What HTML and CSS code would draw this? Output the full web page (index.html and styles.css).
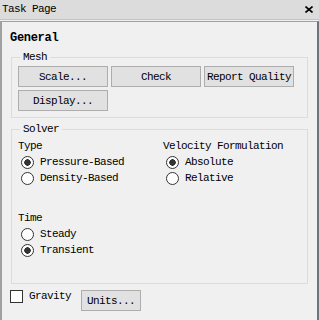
FILE: index.html
```html
<!DOCTYPE html>
<html lang="en">
<head>
    <meta charset="UTF-8">
    <title>Task Page</title>
    <link rel="stylesheet" href="styles.css">
</head>
<body>
    <div class="titlebar">
        <span class="title">Task Page</span>
        <svg class="close" width="8" height="7" viewBox="0 0 8 7">
            <path d="M0.5 0.5 L7.5 6.5 M7.5 0.5 L0.5 6.5" stroke="#000" stroke-width="1.6" fill="none"/>
        </svg>
    </div>

    <div class="panel">
        <div class="heading">General</div>

        <fieldset class="group mesh">
            <legend>Mesh</legend>
            <div class="btn-grid">
                <button class="btn">Scale...</button>
                <button class="btn">Check</button>
                <button class="btn">Report Quality</button>
                <button class="btn">Display...</button>
            </div>
        </fieldset>

        <fieldset class="group solver">
            <legend>Solver</legend>
            <div class="cols">
                <div class="col">
                    <div class="label">Type</div>
                    <div class="radio"><span class="dot checked"></span>Pressure-Based</div>
                    <div class="radio"><span class="dot"></span>Density-Based</div>
                </div>
                <div class="col">
                    <div class="label">Velocity Formulation</div>
                    <div class="radio"><span class="dot checked"></span>Absolute</div>
                    <div class="radio"><span class="dot"></span>Relative</div>
                </div>
            </div>
            <div class="time">
                <div class="label">Time</div>
                <div class="radio"><span class="dot"></span>Steady</div>
                <div class="radio"><span class="dot checked"></span>Transient</div>
            </div>
        </fieldset>

        <div class="bottom-row">
            <span class="check"></span>
            <span class="check-label">Gravity</span>
            <button class="btn units">Units...</button>
        </div>
    </div>
</body>
</html>
```

FILE: styles.css
```css
body {
    margin: 0;
    width: 319px;
    height: 320px;
    overflow: hidden;
    display: flex;
    flex-direction: column;
    background-color: #f0f0f0;
    font-family: "Liberation Mono", monospace;
    font-size: 11px;
    letter-spacing: -0.6px;
    color: #000;
}

.titlebar {
    display: flex;
    justify-content: space-between;
    align-items: center;
    flex: none;
    height: 19px;
    padding: 0 6px 0 2px;
    background-color: #dcdcdc;
    border-bottom: 1px solid #c4c4c4;
}

.title {
    line-height: 19px;
}

.close {
    display: block;
}

.panel {
    flex: 1;
    margin-top: 1px;
    border-top: 1px solid #a0a0a0;
    border-left: 2px solid #a0a0a0;
    border-right: 2px solid #6e747a;
    padding: 9px 9px 0 9px;
}

.heading {
    font-weight: bold;
    font-size: 12px;
    letter-spacing: -0.3px;
    line-height: 14px;
    margin-left: -1px;
}

.group {
    margin: 5px 0 0 0;
    padding: 2px 6px 6px 6px;
    border: 1px solid #dcdcdc;
    min-width: 0;
}

.group legend {
    padding: 0 3px;
    margin-left: 2px;
    line-height: 14px;
}

.solver {
    margin-top: 4px;
    padding-top: 3px;
    padding-bottom: 25px;
}

.btn-grid {
    display: grid;
    grid-template-columns: repeat(3, 90px);
    gap: 3px;
}

.btn {
    height: 21px;
    padding: 0;
    background-color: #e1e1e1;
    border: 1px solid #adadad;
    border-radius: 0;
    font-family: inherit;
    font-size: 11px;
    letter-spacing: -0.6px;
    color: #000;
}

.cols {
    display: grid;
    grid-template-columns: 145px 1fr;
}

.label {
    line-height: 15px;
}

.radio {
    display: flex;
    align-items: center;
    height: 16px;
}

.dot {
    box-sizing: border-box;
    width: 13px;
    height: 13px;
    margin: 0 6px 0 3px;
    border: 1px solid #333;
    border-radius: 50%;
    background-color: #fff;
}

.dot.checked {
    background: radial-gradient(circle, #333 0 3px, #fff 3.5px);
}

.time {
    margin-top: 25px;
}

.time .label {
    line-height: 14px;
    margin-bottom: 1px;
}

.bottom-row {
    display: flex;
    align-items: flex-start;
    margin-top: 6px;
}

.check {
    box-sizing: border-box;
    width: 13px;
    height: 13px;
    margin-left: -1px;
    border: 1px solid #333;
    background-color: #fff;
}

.check-label {
    margin-left: 6px;
    line-height: 13px;
}

.units {
    width: 60px;
    margin-left: 10px;
}
```
